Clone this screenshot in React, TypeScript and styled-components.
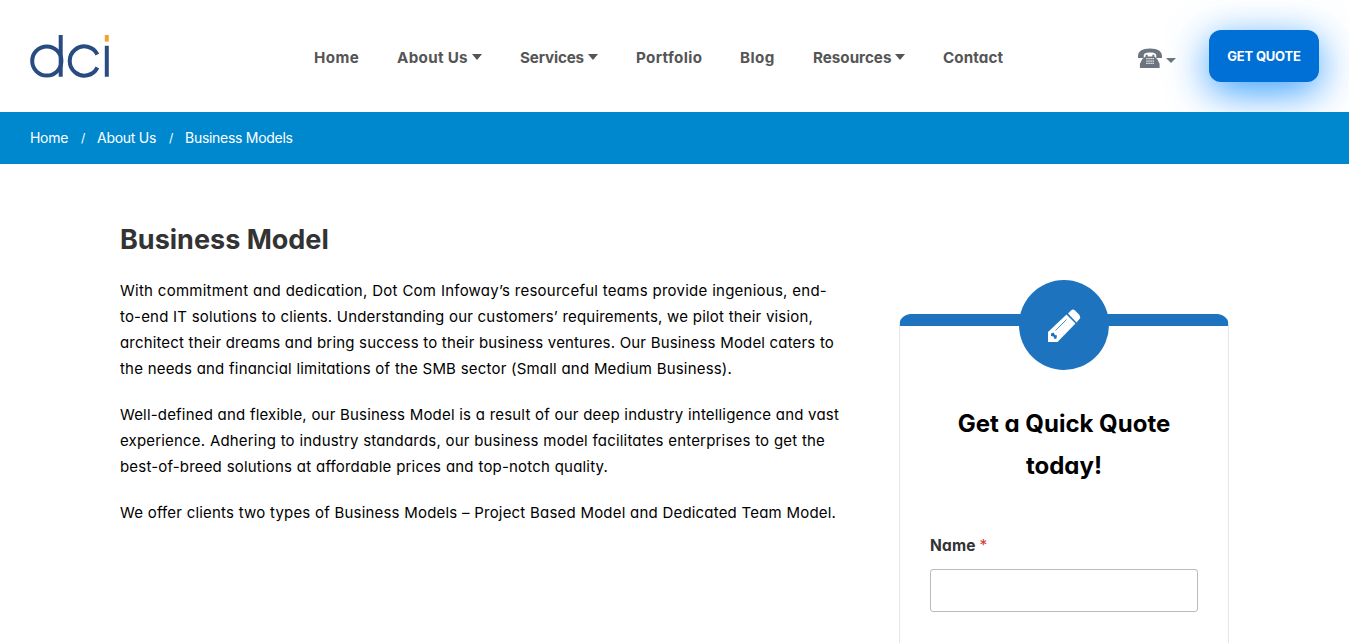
import React from "react";
import styled, { createGlobalStyle } from "styled-components";

const GlobalStyle = createGlobalStyle`
  *, *::before, *::after { box-sizing: border-box; }
  body {
    margin: 0;
    background: #fff;
    color: #000;
    font-family: Inter, "Noto Sans", sans-serif;
    font-feature-settings: "cv11";
  }
  h1, h2, p { margin: 0; }
  a { color: inherit; text-decoration: none; }
`;

const Page = styled.div`
  width: 1349px;
  height: 643px;
  overflow: hidden;
`;

const Header = styled.header`
  display: flex;
  align-items: center;
  height: 112px;
  padding: 0 30px;
`;

const Logo = styled.svg`
  display: block;
  flex: none;
  width: 80px;
  height: 44px;
  margin: 2px 204px 0 0;
  overflow: visible;
`;

const Nav = styled.nav`
  display: flex;
  flex: none;
  gap: 38px;
  height: 24px;
  margin-top: 3px;
`;

const NavItem = styled.a<{ $w: number; $spacing: number }>`
  display: flex;
  align-items: center;
  justify-content: space-between;
  width: ${(p) => p.$w}px;
  font-size: 15.2px;
  font-weight: 650;
  line-height: 24px;
  letter-spacing: ${(p) => p.$spacing}px;
  color: #555;
  white-space: nowrap;
`;

const Caret = styled.span<{ $color?: string }>`
  margin-bottom: 2px;
  border: 5px solid transparent;
  border-top: 6px solid ${(p) => p.$color ?? "#555"};
  border-bottom: 0;
`;

const Phone = styled.div`
  display: flex;
  flex: none;
  align-items: center;
  gap: 4px;
  width: 38px;
  margin-top: 4px;
  margin-left: auto;
  margin-right: 33px;

  ${Caret} {
    margin: 5px 0 0;
    border-top-width: 5px;
  }
`;

const QuoteButton = styled.a`
  display: flex;
  align-items: center;
  justify-content: center;
  flex: none;
  width: 110px;
  height: 52px;
  border-radius: 12px;
  background: #0070d6;
  color: #fff;
  font-size: 13px;
  font-weight: 650;
  letter-spacing: -0.2px;
  box-shadow: 0 10px 40px #0084ffcc;
`;

const Breadcrumbs = styled.div`
  position: relative;
  display: flex;
  align-items: center;
  height: 52px;
  padding: 0 30px 2px;
  background: #0088cf;
  color: #fff;
  font-size: 14px;
  letter-spacing: -0.28px;
`;

const Crumb = styled.span<{ $w: number }>`
  width: ${(p) => p.$w}px;
  white-space: nowrap;
`;

const Slash = styled.span`
  width: 28px;
  padding-left: 12px;
  font-size: 12px;
`;

const Main = styled.main`
  display: flex;
  align-items: flex-start;
  padding-left: 120px;
`;

const Article = styled.article`
  width: 779px;
  padding-top: 55px;
`;

const Title = styled.h1`
  margin-bottom: 17px;
  font-size: 27px;
  line-height: 42px;
  font-weight: 700;
  color: #333;
`;

const Paragraph = styled.p`
  margin-bottom: 20px;
  font-size: 15px;
  font-weight: 380;
  line-height: 26px;
`;

const Line = styled.span<{ $w: number; $spacing: number }>`
  display: block;
  width: ${(p) => p.$w}px;
  letter-spacing: ${(p) => p.$spacing}px;
  white-space: nowrap;
  text-align-last: justify;
`;

const Card = styled.aside`
  width: 330px;
  height: 500px;
  margin-top: 150px;
  border: 1px solid #e6e6e6;
  border-top: 12px solid #1e73be;
  border-radius: 12px 12px 0 0;
  padding: 0 30px;
`;

const Badge = styled.div`
  display: flex;
  align-items: center;
  justify-content: center;
  width: 90px;
  height: 90px;
  margin: -46px auto 0;
  border-radius: 50%;
  background: #1e73be;
`;

const CardTitle = styled.h2`
  margin-top: 33px;
  font-size: 24px;
  line-height: 42px;
  font-weight: 700;
  text-align: center;
`;

const Label = styled.label`
  display: block;
  margin-top: 46px;
  font-size: 15.5px;
  line-height: 26px;
  font-weight: 650;
  letter-spacing: 0.15px;
  color: #333;
`;

const Required = styled.span`
  color: #d63637;
  font-weight: 400;
`;

const Input = styled.input`
  display: block;
  width: 268px;
  height: 43px;
  margin-top: 10px;
  border: 1px solid #bbb;
  border-radius: 3px;
`;

const nav = [
  { label: "Home", w: 45, spacing: 0.4 },
  { label: "About Us", w: 85, spacing: 0.3, caret: true },
  { label: "Services", w: 78, spacing: -0.15, caret: true },
  { label: "Portfolio", w: 66, spacing: 0.35 },
  { label: "Blog", w: 35, spacing: 0.4 },
  { label: "Resources", w: 92, spacing: 0, caret: true },
  { label: "Contact", w: 60, spacing: 0.1 },
];

const paragraphs: [string, number, number][][] = [
  [
    ["With commitment and dedication, Dot Com Infoway’s resourceful teams provide ingenious, end-", 707, 0.24],
    ["to-end IT solutions to clients. Understanding our customers’ requirements, we pilot their vision,", 693, 0.18],
    ["architect their dreams and bring success to their business ventures. Our Business Model caters to", 714, 0.16],
    ["the needs and financial limitations of the SMB sector (Small and Medium Business).", 612, 0.18],
  ],
  [
    ["Well-defined and flexible, our Business Model is a result of our deep industry intelligence and vast", 719, 0.18],
    ["experience. Adhering to industry standards, our business model facilitates enterprises to get the", 705, 0.18],
    ["best-of-breed solutions at affordable prices and top-notch quality.", 488, 0.18],
  ],
  [["We offer clients two types of Business Models – Project Based Model and Dedicated Team Model.", 716, 0.18]],
];

export default function App() {
  return (
    <Page>
      <GlobalStyle />
      <Header>
        <Logo viewBox="30 35 80 44" fill="none" stroke="#284b82" strokeWidth="4">
          <circle cx="46.8" cy="61" r="14.6" />
          <path d="M60.7 35V76.7M97.4 54.5A14.6 14.6 0 1 0 97.4 67.5M106.8 45.7V76.7" />
          <path d="M106.8 35V41.6" stroke="#f9a02c" />
        </Logo>
        <Nav>
          {nav.map((n) => (
            <NavItem key={n.label} href="#" $w={n.w} $spacing={n.spacing}>
              {n.label}
              {n.caret && <Caret />}
            </NavItem>
          ))}
        </Nav>
        <Phone>
          <svg width="24.5" height="21" viewBox="0 0 25 21" fill="#6c757d">
            <path d="M0 8C0 3 4 0 12.500 0S25 3 25 8V10H19V7.500C19 5 16 4.300 12.500 4.300S6 5 6 7.500V10H0Z" />
            <path d="M8 6.500H10V8.500H15V6.500H17V8.500L20 11L22.500 16V20.500H2V16L4.500 11L8 8.500Z" />
            <path d="M8.700 10.700H16.500M8.700 13.200H16.500M8.700 15.700H16.500" stroke="#fff" strokeWidth="1.300" strokeDasharray="1.300 0.850" />
          </svg>
          <Caret $color="#6c757d" />
        </Phone>
        <QuoteButton href="#">GET QUOTE</QuoteButton>
      </Header>
      <Breadcrumbs>
        <Crumb $w={39}>Home</Crumb>
        <Slash>/</Slash>
        <Crumb $w={60}>About Us</Crumb>
        <Slash>/</Slash>
        <Crumb $w={108}>Business Models</Crumb>
      </Breadcrumbs>
      <Main>
        <Article>
          <Title>Business Model</Title>
          {paragraphs.map((lines, i) => (
            <Paragraph key={i}>
              {lines.map(([text, w, spacing]) => (
                <Line key={text} $w={w} $spacing={spacing}>{text}</Line>
              ))}
            </Paragraph>
          ))}
        </Article>
        <Card>
          <Badge>
            <svg width="33" height="33" viewBox="0 0 33 33" fill="#fff">
              <path d="M0 23L18.500 5.500L27.500 14.500L9.500 33H0Z" />
              <path d="M20 4.500L23 1.500Q25 -.5 27 1.500L31 5.500Q33 8 31.500 10L28.500 13.500Z" />
              <path d="M7.500 21.500L18.500 10.500" stroke="#1e73be" strokeWidth="0.8" />
              <path d="M3 24.500L5.500 23.500L7 26L9 26.500L8.500 29.500L6.500 30L5.500 27.500L3 27Z" fill="#1e73be" />
            </svg>
          </Badge>
          <CardTitle>Get a Quick Quote today!</CardTitle>
          <Label>
            Name <Required>*</Required>
          </Label>
          <Input />
        </Card>
      </Main>
    </Page>
  );
}
